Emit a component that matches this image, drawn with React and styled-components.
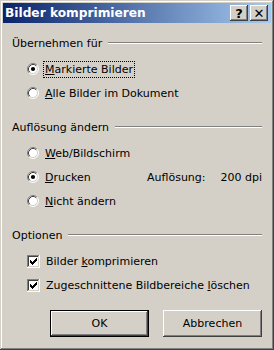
import React from 'react';
import styled, { createGlobalStyle } from 'styled-components';

const Global = createGlobalStyle`
  html, body { margin: 0; padding: 0; background: #D4D0C8; }
  body { font-family: "DejaVu Sans", sans-serif; }
`;

const Window = styled.div`
  box-sizing: border-box;
  width: 274px;
  height: 350px;
  background: #D4D0C8;
  padding: 3px;
  box-shadow: inset -1px -1px 0 #404040, inset 1px 1px 0 #D4D0C8,
    inset -2px -2px 0 #808080, inset 2px 2px 0 #FFFFFF;
  display: flex;
  flex-direction: column;
  font-family: "DejaVu Sans", sans-serif;
  font-size: 11px;
  color: #000;
`;

const TitleBar = styled.div`
  height: 20px;
  flex: none;
  display: flex;
  align-items: center;
  padding: 0 3px 0 2px;
  background: linear-gradient(to right, #0A246A, #A6CAF0);
`;

const Title = styled.div`
  flex: 1;
  color: #fff;
  font-weight: bold;
  font-size: 12.2px;
`;

const CapButton = styled.div`
  box-sizing: border-box;
  width: 18px;
  height: 16px;
  margin-left: ${(p) => (p.$gap ? '2px' : '0')};
  background: #D4D0C8;
  box-shadow: inset -1px -1px 0 #404040, inset 1px 1px 0 #FFFFFF,
    inset -2px -2px 0 #808080;
  display: flex;
  align-items: center;
  justify-content: center;
  font-weight: bold;
  font-size: 13px;
  line-height: 1;
  color: #000;
`;

const Body = styled.div`
  flex: 1;
  display: flex;
  flex-direction: column;
  padding: 12px 9px 0 9px;
`;

const Group = styled.div`
  display: flex;
  flex-direction: column;
  margin-bottom: ${(p) => p.$mb}px;
`;

const Legend = styled.div`
  height: 16px;
  display: flex;
  align-items: center;
  gap: 6px;
  &::after {
    content: '';
    flex: 1;
    height: 0;
    border-top: 1px solid #808080;
    border-bottom: 1px solid #FFFFFF;
  }
`;

const Options = styled.div`
  display: flex;
  flex-direction: column;
  margin-top: 6px;
  padding-left: ${(p) => p.$indent}px;
`;

const Row = styled.div`
  height: 24px;
  display: flex;
  align-items: center;
`;

const Label = styled.span`
  margin-left: ${(p) => p.$gap}px;
  padding: 1px 1px;
  outline: ${(p) => (p.$focus ? '1px dotted #000' : 'none')};
`;

const Value = styled.div`
  margin-left: auto;
  width: 115px;
  flex: none;
  display: flex;
  justify-content: space-between;
`;

const ButtonRow = styled.div`
  display: flex;
  justify-content: flex-end;
  gap: 14px;
`;

const Button = styled.div`
  box-sizing: border-box;
  width: 99px;
  height: 27px;
  display: flex;
  align-items: center;
  justify-content: center;
  background: #D4D0C8;
  box-shadow: ${(p) =>
    p.$default
      ? 'inset 0 0 0 1px #000, inset -2px -2px 0 #404040, inset 2px 2px 0 #FFFFFF, inset -3px -3px 0 #808080'
      : 'inset -1px -1px 0 #404040, inset 1px 1px 0 #FFFFFF, inset -2px -2px 0 #808080'};
`;

const Radio = ({ checked }) => (
  <svg width="12" height="12" viewBox="0 0 12 12" style={{ flex: 'none' }}>
    <circle cx="6" cy="6" r="5" fill="#fff" />
    <path d="M2.11 9.89 A5.5 5.5 0 0 1 9.89 2.11" stroke="#808080" fill="none" />
    <path d="M9.89 2.11 A5.5 5.5 0 0 1 2.11 9.89" stroke="#fff" fill="none" />
    <path d="M2.82 9.18 A4.5 4.5 0 0 1 9.18 2.82" stroke="#404040" fill="none" />
    <path d="M9.18 2.82 A4.5 4.5 0 0 1 2.82 9.18" stroke="#D4D0C8" fill="none" />
    {checked && <circle cx="6" cy="6" r="2.1" fill="#000" />}
  </svg>
);

const Check = () => (
  <svg width="13" height="13" viewBox="0 0 13 13" style={{ flex: 'none' }} shapeRendering="crispEdges">
    <rect x="0" y="0" width="13" height="13" fill="#fff" />
    <rect x="0" y="0" width="12" height="1" fill="#808080" />
    <rect x="0" y="0" width="1" height="12" fill="#808080" />
    <rect x="1" y="1" width="10" height="1" fill="#404040" />
    <rect x="1" y="1" width="1" height="10" fill="#404040" />
    <rect x="1" y="11" width="11" height="1" fill="#D4D0C8" />
    <rect x="11" y="1" width="1" height="11" fill="#D4D0C8" />
    <g fill="#000">
      <rect x="3" y="5" width="1" height="3" />
      <rect x="4" y="6" width="1" height="3" />
      <rect x="5" y="7" width="1" height="3" />
      <rect x="6" y="6" width="1" height="3" />
      <rect x="7" y="5" width="1" height="3" />
      <rect x="8" y="4" width="1" height="3" />
      <rect x="9" y="3" width="1" height="3" />
    </g>
  </svg>
);

export default function App() {
  return (
    <>
      <Global />
      <Window>
        <TitleBar>
          <Title>Bilder komprimieren</Title>
          <CapButton>?</CapButton>
          <CapButton $gap>✕</CapButton>
        </TitleBar>
        <Body>
          <Group $mb={14}>
            <Legend>Übernehmen für</Legend>
            <Options $indent={15}>
              <Row>
                <Radio checked />
                <Label $gap={5} $focus>
                  <u>M</u>arkierte Bilder
                </Label>
              </Row>
              <Row>
                <Radio />
                <Label $gap={5}>
                  <u>A</u>lle Bilder im Dokument
                </Label>
              </Row>
            </Options>
          </Group>
          <Group $mb={14}>
            <Legend>Auflösung ändern</Legend>
            <Options $indent={15}>
              <Row>
                <Radio />
                <Label $gap={5}>
                  <u>W</u>eb/Bildschirm
                </Label>
              </Row>
              <Row>
                <Radio checked />
                <Label $gap={5}>
                  <u>D</u>rucken
                </Label>
                <Value>
                  <span>Auflösung:</span>
                  <span>200 dpi</span>
                </Value>
              </Row>
              <Row>
                <Radio />
                <Label $gap={5}>
                  <u>N</u>icht ändern
                </Label>
              </Row>
            </Options>
          </Group>
          <Group $mb={13}>
            <Legend>Optionen</Legend>
            <Options $indent={15}>
              <Row>
                <Check />
                <Label $gap={5}>
                  Bilder <u>k</u>omprimieren
                </Label>
              </Row>
              <Row>
                <Check />
                <Label $gap={5}>
                  Zugeschnittene Bildbereiche <u>l</u>öschen
                </Label>
              </Row>
            </Options>
          </Group>
          <ButtonRow>
            <Button $default>OK</Button>
            <Button>Abbrechen</Button>
          </ButtonRow>
        </Body>
      </Window>
    </>
  );
}
